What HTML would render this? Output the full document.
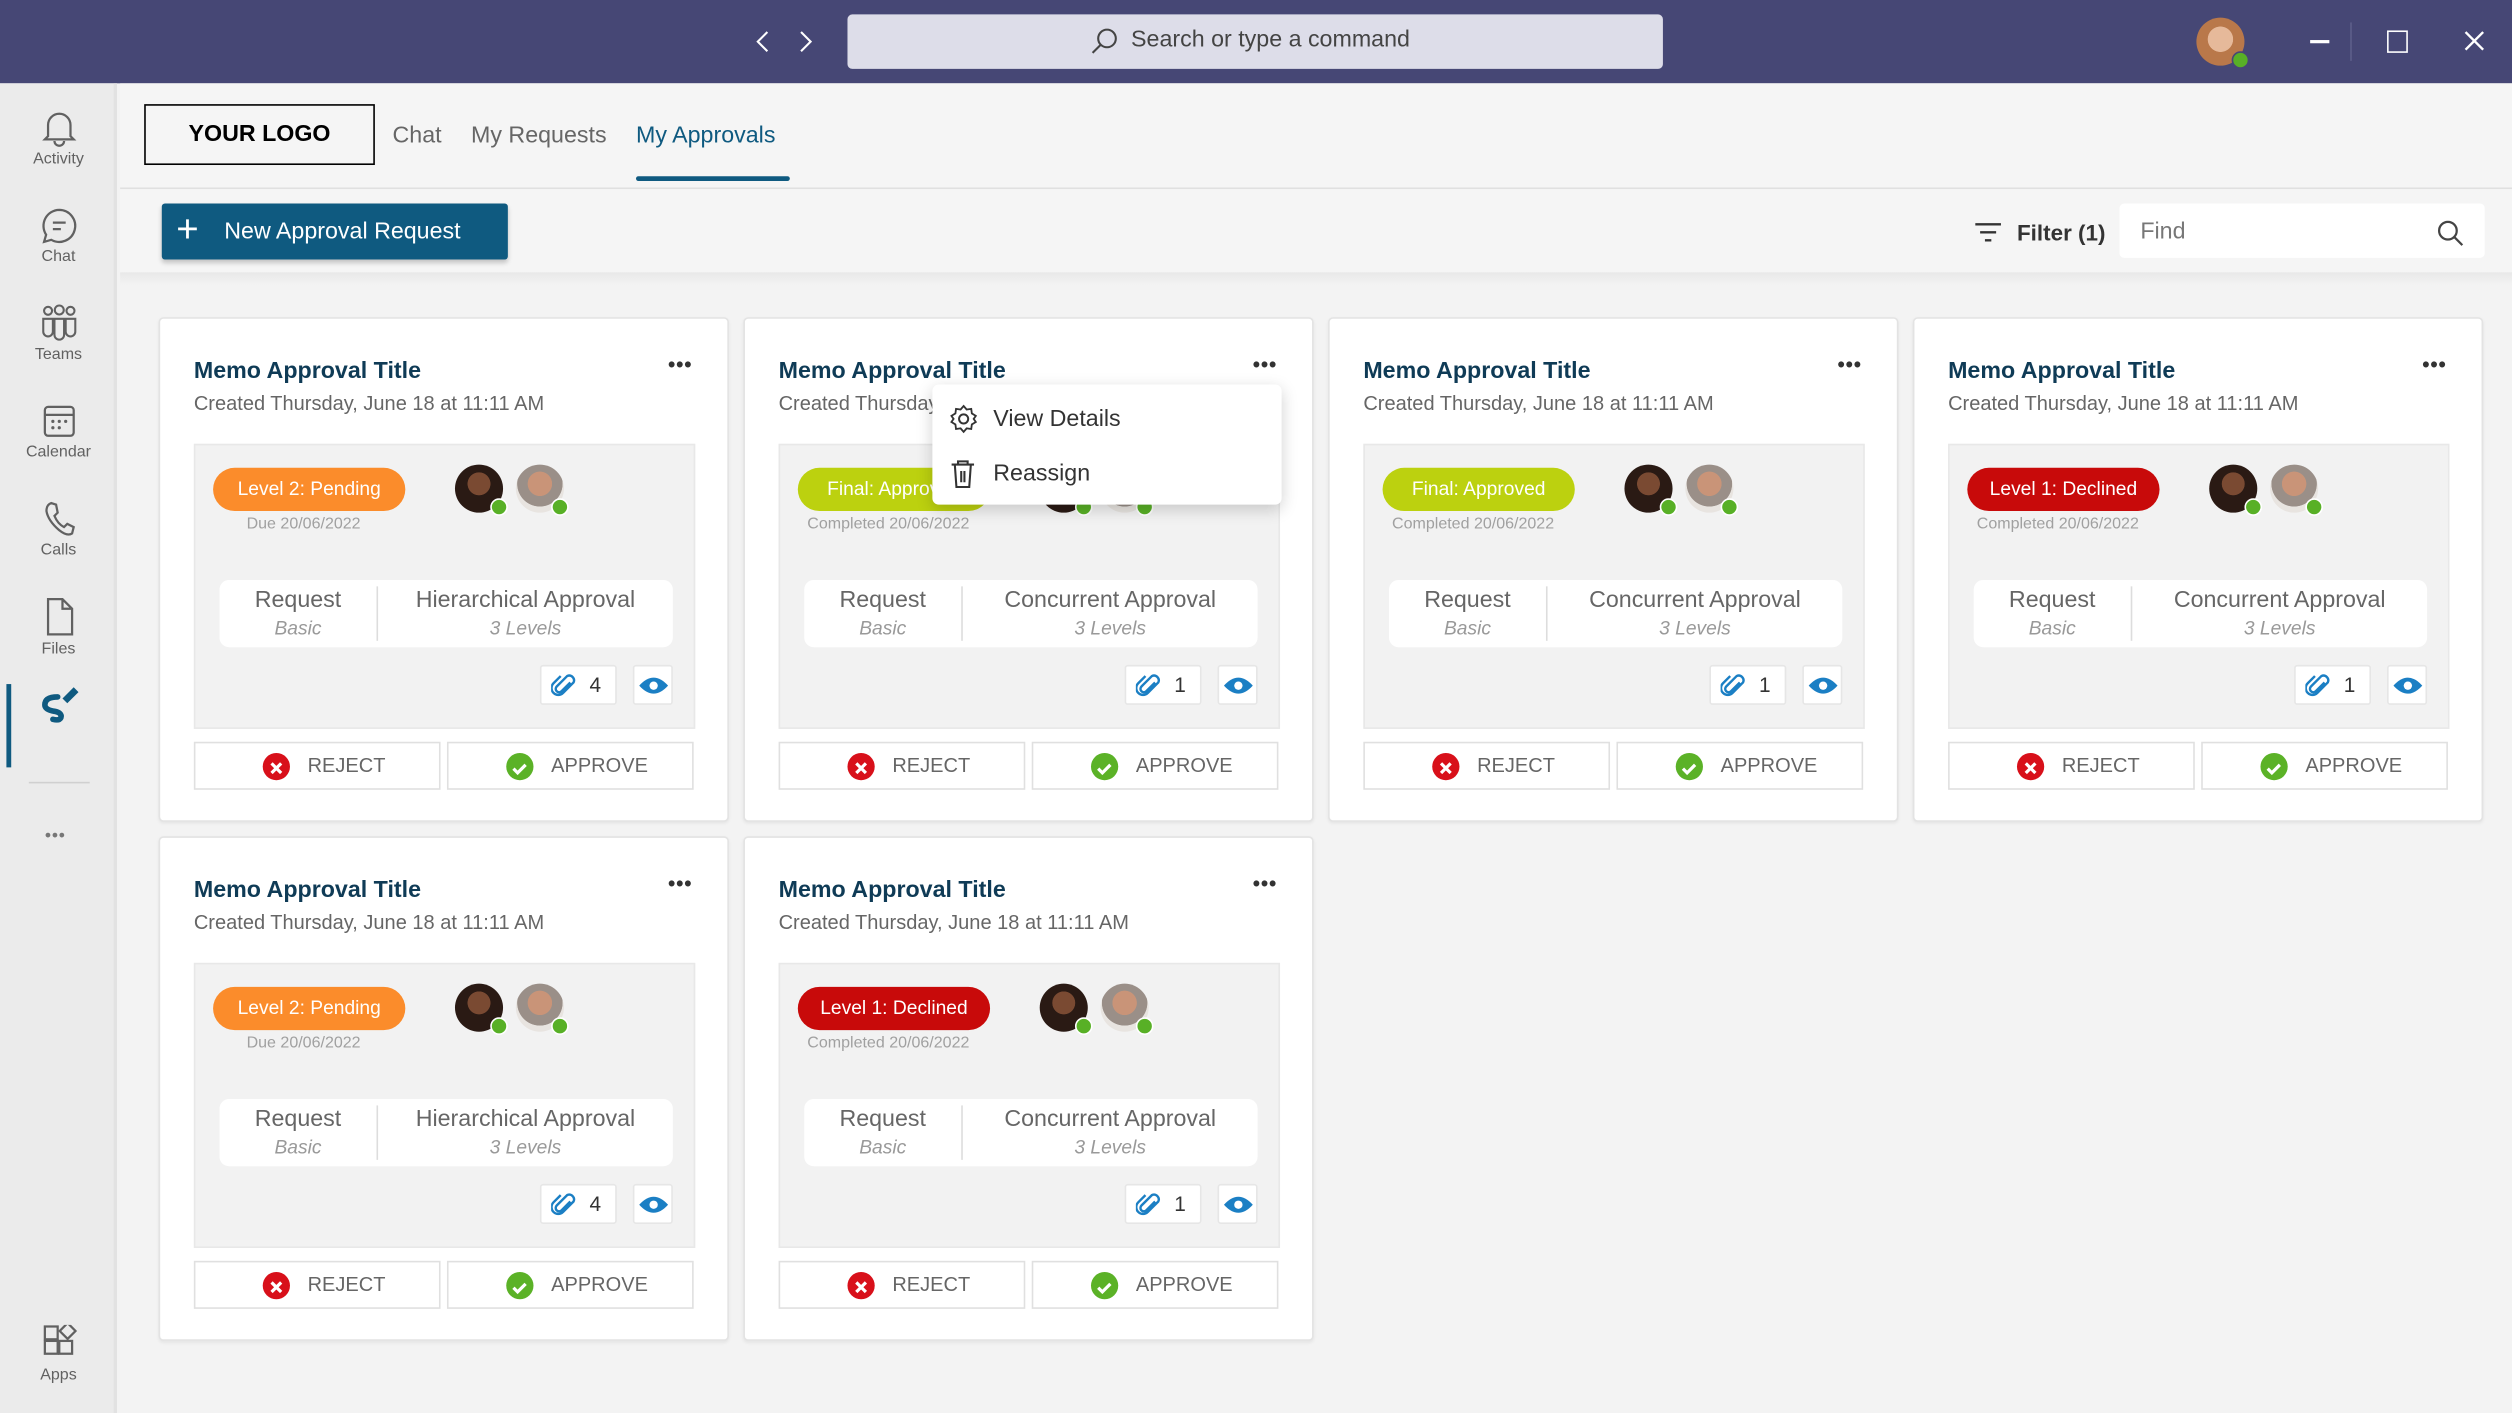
<!DOCTYPE html>
<html><head><meta charset="utf-8"><style>
*{box-sizing:border-box;margin:0;padding:0}
html,body{width:2512px;height:1413px;overflow:hidden;background:#f3f3f3;font-family:"Liberation Sans",sans-serif}
#s{position:absolute;left:0;top:0;width:1568px;height:882px;transform:scale(1.60204);transform-origin:0 0;background:#f3f3f3}
.a{position:absolute}
.top{left:0;top:0;width:1568px;height:52px;background:#464775}
.side{left:0;top:52px;width:73px;height:830px;background:#ebebeb;border-right:2px solid #e2e2e2}
.si{position:absolute;left:0;width:73px;text-align:center;font-size:10px;color:#616161}
.si svg{display:block;margin:0 auto 2px}
.card{position:absolute;width:356px;height:315px;background:#fff;border:1px solid #e3e3e3;border-radius:3px;box-shadow:0 1px 2px rgba(0,0,0,.06)}
.t{position:absolute;left:21px;top:25px;font-size:14.5px;font-weight:bold;color:#0f3b56}
.c{position:absolute;left:21px;top:46px;font-size:12.5px;color:#666}
.d{position:absolute;left:317px;top:21px;font-size:13px;font-weight:bold;color:#333;letter-spacing:0.5px}
.g{position:absolute;left:21px;top:78px;width:313px;height:178px;background:#f2f2f2;border:1px solid #e8e8e8}
.p{position:absolute;left:11px;top:14px;width:120px;height:27px;border-radius:14px;color:#fff;font-size:12px;text-align:center;line-height:27px}
.dt{position:absolute;left:8px;top:44px;width:119px;text-align:center;font-size:10px;color:#a0a0a0}
.av{position:absolute;top:12px;width:30px;height:30px;border-radius:50%}
.av1{left:162px;background:radial-gradient(circle at 50% 40%,#7a4a32 0 30%,#2a1a14 31% 100%)}
.av2{left:200px;background:radial-gradient(circle at 50% 40%,#c99478 0 32%,#9a8f88 33% 60%,#e8e4e0 61%)}
.ck{position:absolute;right:-3px;bottom:-2px;width:11px;height:11px;border-radius:50%;background:#58b026;border:1px solid #fff}
.ib{position:absolute;left:15px;top:84px;width:283px;height:42px;background:#fff;border-radius:6px}
.ib .l{position:absolute;left:0;width:98px;top:4px;text-align:center}
.ib .r{position:absolute;left:98px;right:0;top:4px;text-align:center;border-left:1px solid #ddd}
.m{font-size:14.5px;color:#666;line-height:19px}
.s{font-size:12px;color:#999;font-style:italic;line-height:15px}
.at{position:absolute;left:215px;top:137px;width:48px;height:25px;background:#fff;border:1px solid #e6e6e6;border-radius:2px;font-size:13px;color:#333}
.ey{position:absolute;left:273px;top:137px;width:25px;height:25px;background:#fff;border:1px solid #e6e6e6;border-radius:2px}
.b{position:absolute;top:264px;width:154px;height:30px;border:1px solid #e0e0e0;background:#fff;font-size:12.5px;color:#666;line-height:28px}
.b .ic{position:absolute;top:6px;width:17px;height:17px;border-radius:50%}
.b span{position:absolute}
</style></head><body><div id="s">
<div class="a top">
 <svg class="a" style="left:472px;top:19px" width="8" height="14" viewBox="0 0 8 14"><path d="M7 1 1 7l6 6" fill="none" stroke="#fff" stroke-width="1.3"/></svg>
 <svg class="a" style="left:499px;top:19px" width="8" height="14" viewBox="0 0 8 14"><path d="M1 1l6 6-6 6" fill="none" stroke="#fff" stroke-width="1.3"/></svg>
 <div class="a" style="left:529px;top:9px;width:509px;height:34px;background:#dddde9;border-radius:3px"></div>
 <svg class="a" style="left:680px;top:17px" width="18" height="18" viewBox="0 0 18 18"><circle cx="11" cy="7" r="5.5" fill="none" stroke="#444" stroke-width="1.3"/><path d="M7 11 2 16" stroke="#444" stroke-width="1.3"/></svg>
 <div class="a" style="left:706px;top:17px;font-size:14.5px;color:#444">Search or type a command</div>
 <div class="a" style="left:1371px;top:11px;width:30px;height:30px;border-radius:50%;background:radial-gradient(circle at 50% 45%,#e6b99a 0 35%,#b9784a 36%)"><div class="ck" style="background:#58b026;border-color:#464775"></div></div>
 <div class="a" style="left:1467px;top:14px;width:1px;height:24px;background:#5d5e8a"></div>
 <div class="a" style="left:1442px;top:25px;width:12px;height:1.5px;background:#fff"></div>
 <div class="a" style="left:1490px;top:19px;width:13px;height:14px;border:1.5px solid #fff"></div>
 <svg class="a" style="left:1538px;top:19px" width="13" height="13" viewBox="0 0 13 13"><path d="M1 1l11 11M12 1 1 12" stroke="#fff" stroke-width="1.5"/></svg>
</div>
<div class="a side">
 <div class="si" style="top:16px"><svg width="22" height="24" viewBox="0 0 22 24"><path d="M4 17V10a7 7 0 0114 0v7l2 2H2z M8 20a3 3 0 006 0" fill="none" stroke="#616161" stroke-width="1.4"/></svg>Activity</div>
 <div class="si" style="top:77px"><svg width="24" height="24" viewBox="0 0 24 24"><path d="M12 2a10 10 0 11-5 18.7L2.5 22l1.3-4.5A10 10 0 0112 2z M8 10h8 M8 14h5" fill="none" stroke="#616161" stroke-width="1.4"/></svg>Chat</div>
 <div class="si" style="top:138px"><svg width="26" height="24" viewBox="0 0 26 24"><circle cx="6" cy="4" r="2.5" fill="none" stroke="#616161" stroke-width="1.3"/><circle cx="13" cy="3.5" r="2.8" fill="none" stroke="#616161" stroke-width="1.3"/><circle cx="20" cy="4" r="2.5" fill="none" stroke="#616161" stroke-width="1.3"/><path d="M3 9h6v8a3 3 0 01-6 0z M10 9h6v10a3 3 0 01-6 0z M17 9h6v8a3 3 0 01-6 0z" fill="none" stroke="#616161" stroke-width="1.3"/></svg>Teams</div>
 <div class="si" style="top:199px"><svg width="22" height="24" viewBox="0 0 22 24"><rect x="2" y="3" width="18" height="18" rx="2" fill="none" stroke="#616161" stroke-width="1.4"/><path d="M2 8h18" stroke="#616161" stroke-width="1.4"/><circle cx="7" cy="12" r="1" fill="#616161"/><circle cx="11" cy="12" r="1" fill="#616161"/><circle cx="15" cy="12" r="1" fill="#616161"/><circle cx="7" cy="16" r="1" fill="#616161"/><circle cx="11" cy="16" r="1" fill="#616161"/></svg>Calendar</div>
 <div class="si" style="top:260px"><svg width="22" height="24" viewBox="0 0 22 24"><path d="M6 2 9 3 10 8 8 10Q10 15 14 17L16 15 20 17 19 21Q16 23 11 19 4 13 3 7 3 3 6 2z" fill="none" stroke="#616161" stroke-width="1.4"/></svg>Calls</div>
 <div class="si" style="top:320px"><svg width="22" height="26" viewBox="0 0 22 26"><path d="M4 2h9l6 6v16H4z M13 2v6h6" fill="none" stroke="#616161" stroke-width="1.4"/></svg>Files</div>
 <div class="a" style="left:4px;top:375px;width:3px;height:52px;background:#0f5a80"></div>
 <svg class="a" style="left:23px;top:374px" width="28" height="28" viewBox="0 0 28 28"><path d="M16 10l7-7 3 3-7 7z" fill="#0f5a80"/><path d="M13 9Q5 9 5 14q0 3 6 4 5 1 4 4-1 2-5 1" fill="none" stroke="#0f5a80" stroke-width="3.5" stroke-linecap="round"/></svg>
 <div class="a" style="left:18px;top:436px;width:38px;height:1px;background:#d0d0d0"></div>
 <div class="a" style="left:28px;top:464px;font-size:11px;color:#777;letter-spacing:0.5px">•••</div>
 <div class="si" style="top:775px"><svg width="22" height="24" viewBox="0 0 22 24"><rect x="2" y="10" width="8" height="8" fill="none" stroke="#616161" stroke-width="1.4"/><rect x="11" y="10" width="8" height="8" fill="none" stroke="#616161" stroke-width="1.4"/><rect x="2" y="1" width="8" height="8" fill="none" stroke="#616161" stroke-width="1.4"/><rect x="12" y="0" width="7" height="7" transform="rotate(45 15.5 4.5)" fill="none" stroke="#616161" stroke-width="1.4"/></svg>Apps</div>
</div>
<div class="a" style="left:75px;top:52px;width:1493px;height:118px;background:#f5f5f5"></div>
<div class="a" style="left:90px;top:65px;width:144px;height:38px;border:1px solid #000;font-size:14.5px;font-weight:bold;text-align:center;line-height:37px">YOUR LOGO</div>
<div class="a" style="left:245px;top:77px;font-size:14.5px;color:#666">Chat</div>
<div class="a" style="left:294px;top:77px;font-size:14.5px;color:#666">My Requests</div>
<div class="a" style="left:397px;top:77px;font-size:14.5px;color:#0f5a80">My Approvals</div>
<div class="a" style="left:397px;top:110px;width:96px;height:3px;background:#0f5a80;border-radius:2px"></div>
<div class="a" style="left:75px;top:117px;width:1493px;height:1px;background:#e0e0e0"></div>
<div class="a" style="left:101px;top:127px;width:216px;height:35px;background:#0f5a80;border-radius:2px;color:#fff;font-size:14.5px;line-height:36px;box-shadow:0 2px 3px rgba(0,0,0,.2)"><span style="position:absolute;left:9px;font-size:24px;top:-1px">+</span><span style="position:absolute;left:39px">New Approval Request</span></div>
<svg class="a" style="left:1232px;top:138px" width="18" height="14" viewBox="0 0 18 14"><path d="M1 2h16M4 7h10M7 12h4" stroke="#333" stroke-width="1.5"/></svg>
<div class="a" style="left:1259px;top:137px;font-size:14px;font-weight:bold;color:#333">Filter (1)</div>
<div class="a" style="left:1323px;top:127px;width:228px;height:34px;background:#fff;border-radius:3px"></div>
<div class="a" style="left:1336px;top:137px;font-size:14.5px;color:#777">Find</div>
<svg class="a" style="left:1521px;top:137px" width="18" height="18" viewBox="0 0 18 18"><circle cx="7" cy="7" r="5.5" fill="none" stroke="#444" stroke-width="1.4"/><path d="M11 11l5 5" stroke="#444" stroke-width="1.4"/></svg>
<div class="a" style="left:75px;top:170px;width:1493px;height:8px;background:linear-gradient(#e8e8e8,#f3f3f3)"></div>

<div id="cards"></div>
<div class="a" style="left:582px;top:240px;width:218px;height:75px;background:#fff;border-radius:4px;box-shadow:0 3px 10px rgba(0,0,0,.18);z-index:5">
 <svg class="a" style="left:10px;top:12px" width="19" height="19" viewBox="0 0 20 20"><circle cx="10" cy="10" r="3" fill="none" stroke="#333" stroke-width="1.3"/><path d="M10 1.5l2 2.3 3-.4.4 3 2.6 1.6-1.4 2 1.4 2-2.6 1.6-.4 3-3-.4-2 2.3-2-2.3-3 .4-.4-3L2 12l1.4-2L2 8l2.6-1.6.4-3 3 .4z" fill="none" stroke="#333" stroke-width="1.2"/></svg>
 <div class="a" style="left:38px;top:14px;font-size:14.5px;color:#333">View Details</div>
 <svg class="a" style="left:10px;top:46px" width="18" height="19" viewBox="0 0 18 19"><path d="M2 4h14M6 4V2h6v2M4 4l1 14h8l1-14M8 8v7M10 8v7" fill="none" stroke="#333" stroke-width="1.3"/></svg>
 <div class="a" style="left:38px;top:48px;font-size:14.5px;color:#333">Reassign</div>
</div>
</div>
<script>
var cols=[99,464,829,1194],data=[
[0,198,'Level 2: Pending','#fb8c2b','Due 20/06/2022','Hierarchical Approval','4'],
[1,198,'Final: Approved','#bcd10f','Completed 20/06/2022','Concurrent Approval','1'],
[2,198,'Final: Approved','#bcd10f','Completed 20/06/2022','Concurrent Approval','1'],
[3,198,'Level 1: Declined','#c80a0a','Completed 20/06/2022','Concurrent Approval','1'],
[0,522,'Level 2: Pending','#fb8c2b','Due 20/06/2022','Hierarchical Approval','4'],
[1,522,'Level 1: Declined','#c80a0a','Completed 20/06/2022','Concurrent Approval','1']];
var h='';
data.forEach(function(d){
h+='<div class="card" style="left:'+cols[d[0]]+'px;top:'+d[1]+'px">'+
'<div class="t">Memo Approval Title</div><div class="c">Created Thursday, June 18 at 11:11 AM</div><div class="d">•••</div>'+
'<div class="g"><div class="p" style="background:'+d[3]+'">'+d[2]+'</div><div class="dt">'+d[4]+'</div>'+
'<div class="av av1"><div class="ck"></div></div><div class="av av2"><div class="ck"></div></div>'+
'<div class="ib"><div class="l"><div class="m">Request</div><div class="s">Basic</div></div><div class="r"><div class="m">'+d[5]+'</div><div class="s">3 Levels</div></div></div>'+
'<div class="at"><svg style="position:absolute;left:6px;top:4px" width="16" height="16" viewBox="0 0 16 16"><path d="M12 6 6.5 11.5a2 2 0 01-3-3L10 2a3 3 0 014 4l-6.5 6.5a4 4 0 01-6-6L6 2" fill="none" stroke="#1b7fc4" stroke-width="1.5"/></svg><span style="position:absolute;left:30px;top:4px">'+d[6]+'</span></div>'+
'<div class="ey"><svg style="position:absolute;left:2px;top:5px" width="20" height="14" viewBox="0 0 20 14"><path d="M1 7Q10-3 19 7 10 17 1 7z" fill="#1b7fc4"/><circle cx="10" cy="7" r="2.6" fill="#fff"/></svg></div></div>'+
'<div class="b" style="left:21px"><div class="ic" style="left:42px;background:#d8101a"><svg width="17" height="17" viewBox="0 0 17 17"><path d="M5.5 5.5l6 6M11.5 5.5l-6 6" stroke="#fff" stroke-width="2"/></svg></div><span style="left:70px">REJECT</span></div>'+
'<div class="b" style="left:179px"><div class="ic" style="left:36px;background:#5bb227"><svg width="17" height="17" viewBox="0 0 17 17"><path d="M4.5 8.8l2.6 2.6 5-5" fill="none" stroke="#fff" stroke-width="2"/></svg></div><span style="left:64px">APPROVE</span></div></div>';
});
document.getElementById('cards').innerHTML=h;
</script>
</body></html>
